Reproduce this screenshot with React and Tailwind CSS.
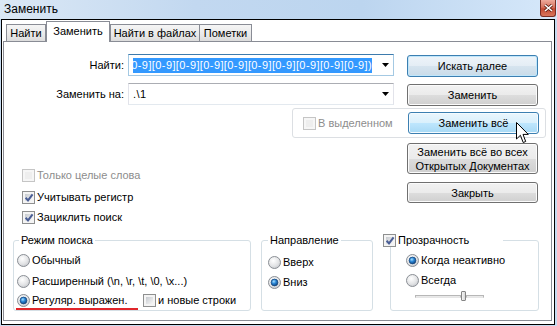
import React from 'react';

// Win7-style controls for the Notepad++ replace dialog

const BTN = {
  normal:
    'border-[#707070] shadow-[inset_0_0_0_1px_#fbfbfb] bg-[linear-gradient(#f2f2f2_0%,#ebebeb_50%,#dddddd_51%,#cfcfcf_100%)]',
  focus:
    'border-[#3c7fb1] shadow-[inset_0_0_0_1px_#bfe6fb] bg-[linear-gradient(#eef4f9_0%,#e4edf5_50%,#d6e4ef_51%,#c9dbe8_100%)]',
  hover:
    'border-[#3c7fb1] shadow-[inset_0_0_0_1px_#f4fbff] bg-[linear-gradient(#eaf6fd_0%,#d9f0fc_50%,#bee6fd_51%,#a7d9f5_100%)]',
};

const Button = ({ kind = 'normal', className = '', children }) => (
  <div
    className={`w-[131px] flex items-center justify-center text-center rounded-[3px] border leading-[14px] ${BTN[kind]} ${className}`}
  >
    {children}
  </div>
);

const CheckBox = ({ checked, disabled }) => (
  <span
    className={`relative block w-[13px] h-[13px] shrink-0 border p-[2px] ${
      disabled ? 'border-[#c5c5c5] bg-[#f6f6f6]' : 'border-[#8e8f8f] bg-[#f4f4f4]'
    }`}
  >
    <span
      className={`block w-full h-full ${
        disabled ? 'bg-[#eeeeee]' : 'bg-[linear-gradient(135deg,#c6cacf,#f7f7f7)]'
      }`}
    />
    {checked && (
      <svg className="absolute left-[1px] top-[1px]" width="10" height="10" viewBox="0 0 10 10">
        <path d="M1.6 4.8 L4 7.4 L8.6 1.4" fill="none" stroke="#4a5e95" strokeWidth="2" />
      </svg>
    )}
  </span>
);

const Radio = ({ checked }) => (
  <svg width="13" height="13" viewBox="0 0 13 13" className="shrink-0">
    <defs>
      <radialGradient id="rbg" cx="0.4" cy="0.35" r="0.75">
        <stop offset="0" stopColor="#ffffff" />
        <stop offset="0.6" stopColor="#e2e3e5" />
        <stop offset="1" stopColor="#bfc2c7" />
      </radialGradient>
      <radialGradient id="rdot" cx="0.4" cy="0.35" r="0.7">
        <stop offset="0" stopColor="#a6e0ff" />
        <stop offset="0.45" stopColor="#2a86d6" />
        <stop offset="1" stopColor="#0c3e78" />
      </radialGradient>
    </defs>
    <circle cx="6.5" cy="6.5" r="6" fill="url(#rbg)" stroke="#8b8f95" />
    {checked && <circle cx="6.5" cy="6.5" r="3.4" fill="url(#rdot)" stroke="#1a4a80" strokeWidth="0.8" />}
  </svg>
);

const RadioRow = ({ checked, className = '', children }) => (
  <div className={`h-[13px] flex items-center gap-[2px] ${className}`}>
    <Radio checked={checked} />
    <span className="whitespace-nowrap">{children}</span>
  </div>
);

const CheckRow = ({ checked, disabled, className = '', children }) => (
  <div className={`h-[13px] flex items-center gap-[2px] ${className}`}>
    <CheckBox checked={checked} disabled={disabled} />
    <span className={`whitespace-nowrap ${disabled ? 'text-[#8d8d8d]' : ''}`}>{children}</span>
  </div>
);

const Arrow = () => (
  <svg width="7" height="4" viewBox="0 0 7 4" className="shrink-0">
    <path d="M0 0 H7 L3.5 4 Z" fill="#000" />
  </svg>
);

const Tab = ({ active, className = '', children }) => (
  <div
    className={
      active
        ? `relative z-10 -mb-px h-[21px] bg-white border border-b-0 border-[#898c95] flex items-start justify-center pt-[3px] ${className}`
        : `h-[17px] border border-b-0 border-[#898c95] bg-[linear-gradient(#f5f5f5,#eaeaea_55%,#dcdcdc)] flex items-center justify-center ${className}`
    }
  >
    {children}
  </div>
);

const FIND = '[0-9][0-9][0-9][0-9][0-9][0-9][0-9][0-9][0-9][0-9])';

export default function App() {
  return (
    <div className="relative w-[557px] h-[326px] overflow-hidden bg-[#c6dbf1] font-['Liberation_Sans',Arial,sans-serif] text-[11px] leading-[13px] text-black">
      {/* Title bar */}
      <div className="h-[19px] flex items-start bg-[linear-gradient(90deg,#dbe8f5_0%,#c2d8f0_35%,#bcd5ef_65%,#d6e8fa_100%)]">
        <span className="ml-[4px] mt-[2px] text-[12px] leading-[15px]">Заменить</span>
        <div className="ml-auto mr-[1px] w-[16px] h-[17px] rounded-b-[3px] border border-t-0 border-[#7a2f25] bg-[linear-gradient(#eeaa9c_0%,#d6735f_45%,#c44a32_55%,#d9765c_100%)] flex items-center justify-center">
          <svg width="9" height="8" viewBox="0 0 9 8">
            <path d="M1 1 L8 7 M8 1 L1 7" stroke="#5a1e14" strokeWidth="3" />
            <path d="M1 1 L8 7 M8 1 L1 7" stroke="#ffffff" strokeWidth="1.6" />
          </svg>
        </div>
      </div>

      {/* Client area */}
      <div className="ml-[1px] w-[554px] h-[306px] border border-black bg-white flex flex-col">
        {/* Tabs */}
        <div className="h-[21px] flex items-end pl-[4px]">
          <Tab className="w-[40px]">Найти</Tab>
          <Tab active className="w-[64px]">Заменить</Tab>
          <Tab className="w-[90px]">Найти в файлах</Tab>
          <Tab className="w-[53px] -ml-px">Пометки</Tab>
        </div>

        {/* Tab panel */}
        <div className="ml-[1px] w-[549px] h-[280px] border border-[#898c95] flex flex-col">
          {/* Find row */}
          <div className="mt-[12px] flex items-start">
            <div className="w-[120px] h-[22px] flex items-center justify-end">Найти:</div>
            <div className="ml-[4px] w-[266px] h-[22px] border border-[#a4c9e3] border-t-[#3d7bad] flex items-center pl-[4px] pr-[3px]">
              <div className="w-[239px] overflow-hidden flex justify-end">
                <span className="whitespace-nowrap bg-[#3399ff] text-white leading-[15px] tracking-[0.4px]">{FIND}</span>
              </div>
              <div className="ml-auto mr-[1px] flex items-center">
                <Arrow />
              </div>
            </div>
            <Button kind="focus" className="ml-[13px] mt-[1px] h-[22px]">Искать далее</Button>
          </div>

          {/* Replace row */}
          <div className="mt-[6px] flex items-start">
            <div className="w-[120px] h-[22px] flex items-center justify-end">Заменить на:</div>
            <div className="ml-[4px] w-[266px] h-[22px] border border-[#e2e3ea] border-t-[#abadb3] border-b-[#e3e9ef] flex items-center pl-[4px] pr-[3px]">
              <span className="tracking-[0.4px]">.\1</span>
              <div className="ml-auto mr-[1px] flex items-center">
                <Arrow />
              </div>
            </div>
            <Button className="ml-[13px] mt-[1px] h-[22px]">Заменить</Button>
          </div>

          {/* In selection box */}
          <div className="mt-[2px] ml-[288px] w-[254px] h-[30px] rounded-[3px] border border-[#dcdfe3] flex items-center pl-[10px] pr-[6px]">
            <CheckRow disabled>В выделенном</CheckRow>
            <Button kind="hover" className="ml-auto h-[22px]">Заменить всё</Button>
          </div>

          {/* Options + more buttons */}
          <div className="mt-[5px] flex items-start">
            <div className="ml-[18px] w-[385px] pt-[26px] flex flex-col">
              <CheckRow disabled>Только целые слова</CheckRow>
              <CheckRow checked className="mt-[9px]">Учитывать регистр</CheckRow>
              <CheckRow checked className="mt-[7px]">Зациклить поиск</CheckRow>
            </div>
            <div className="flex flex-col">
              <Button className="h-[31px]">
                Заменить всё во всех
                <br />
                Открытых Документах
              </Button>
              <Button className="mt-[8px] h-[21px]">Закрыть</Button>
            </div>
          </div>

          {/* Group boxes */}
          <div className="mt-[10px] flex items-start">
            <fieldset className="ml-[9px] w-[238px] h-[77px] rounded-[3px] border border-[#d5dfe5] pl-[3px]">
              <legend className="ml-[2px] px-[2px]">Режим поиска</legend>
              <RadioRow className="mt-[7px]">Обычный</RadioRow>
              <RadioRow className="mt-[8px]">Расширенный (\n, \r, \t, \0, \x...)</RadioRow>
              <div className="mt-[6px] flex items-center">
                <RadioRow checked className="w-[126px]">Регуляр. выражен.</RadioRow>
                <CheckRow>и новые строки</CheckRow>
              </div>
            </fieldset>

            <fieldset className="ml-[10px] w-[112px] h-[77px] rounded-[3px] border border-[#d5dfe5] pl-[6px]">
              <legend className="px-[2px]">Направление</legend>
              <RadioRow className="mt-[9px]">Вверх</RadioRow>
              <RadioRow checked className="mt-[7px]">Вниз</RadioRow>
            </fieldset>

            <fieldset className="ml-[17px] w-[149px] h-[77px] rounded-[3px] border border-[#d5dfe5] pl-[15px]">
              <legend className="-ml-[23px] w-[120px] bg-white">
                <CheckRow checked>Прозрачность</CheckRow>
              </legend>
              <RadioRow checked className="mt-[7px]">Когда неактивно</RadioRow>
              <RadioRow className="mt-[7px]">Всегда</RadioRow>
              <div className="mt-[4px] ml-[9px] h-[10px] flex items-center">
                <div className="w-[46px] h-[3px] border border-[#b7b7b7] border-b-[#e6e6e6] bg-[#e9e9e9]" />
                <div className="w-[5px] h-[10px] rounded-[1px] border border-[#858585] bg-[linear-gradient(90deg,#f4f4f4,#d9d9d9)]" />
                <div className="w-[18px] h-[3px] border border-[#b7b7b7] border-b-[#e6e6e6] bg-[#e9e9e9]" />
              </div>
            </fieldset>
          </div>
        </div>
      </div>

      {/* Red annotation underline */}
      <div className="absolute left-[16px] top-[308px] w-[122px] h-[2px] bg-[#e0262b]" />

      {/* Mouse cursor */}
      <svg className="absolute left-[516px] top-[122px]" width="13" height="22" viewBox="0 0 13 22">
        <path
          d="M0.5 0.5 L0.5 17 L4.4 13.3 L7.2 20.5 L9.7 19.5 L7 12.4 L12.3 12.4 Z"
          fill="#ffffff"
          stroke="#000000"
          strokeWidth="1"
          strokeLinejoin="miter"
        />
      </svg>
    </div>
  );
}
